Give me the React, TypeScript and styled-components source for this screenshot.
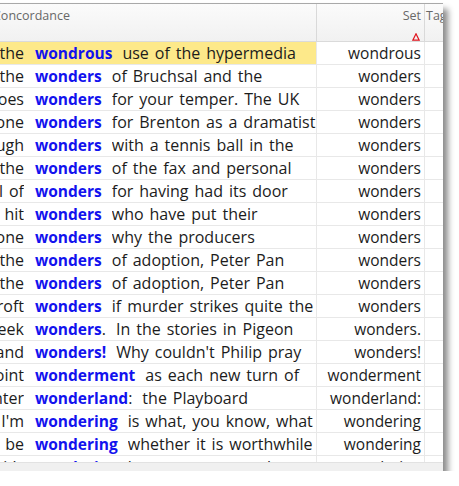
import styled, { createGlobalStyle } from "styled-components";

type Line = {
  left: string;
  keyword: string;
  tail?: string;
  right: string;
  set: string;
  current?: boolean;
};

const lines: Line[] = [
  { left: "made use of the", keyword: "wondrous", right: "use of the hypermedia", set: "wondrous", current: true },
  { left: "marvel at the", keyword: "wonders", right: "of Bruchsal and the", set: "wonders" },
  { left: "it does", keyword: "wonders", right: "for your temper. The UK", set: "wonders" },
  { left: "did no one", keyword: "wonders", right: "for Brenton as a dramatist", set: "wonders" },
  { left: "strangely enough", keyword: "wonders", right: "with a tennis ball in the", set: "wonders" },
  { left: "one of the", keyword: "wonders", right: "of the fax and personal", set: "wonders" },
  { left: "full of", keyword: "wonders", right: "for having had its door", set: "wonders" },
  { left: "hit", keyword: "wonders", right: "who have put their", set: "wonders" },
  { left: "someone", keyword: "wonders", right: "why the producers", set: "wonders" },
  { left: "among the", keyword: "wonders", right: "of adoption, Peter Pan", set: "wonders" },
  { left: "among the", keyword: "wonders", right: "of adoption, Peter Pan", set: "wonders" },
  { left: "Miss Bancroft", keyword: "wonders", right: "if murder strikes quite the", set: "wonders" },
  { left: "seven-day week", keyword: "wonders", tail: ".", right: "In the stories in Pigeon", set: "wonders." },
  { left: "in a strange land", keyword: "wonders!", right: "Why couldn't Philip pray", set: "wonders!" },
  { left: "to the point", keyword: "wonderment", right: "as each new turn of", set: "wonderment" },
  { left: "a winter", keyword: "wonderland", tail: ":", right: "the Playboard", set: "wonderland:" },
  { left: "I'm", keyword: "wondering", right: "is what, you know, what", set: "wondering" },
  { left: "be", keyword: "wondering", right: "whether it is worthwhile", set: "wondering" },
  { left: "it's", keyword: "wondering", right: "how we ever got there at", set: "wondering" },
];

const GlobalStyle = createGlobalStyle`
  html, body {
    margin: 0;
    padding: 0;
    background: #ffffff;
  }
  body {
    font-family: "Open Sans", "Noto Sans", sans-serif;
    overflow: hidden;
  }
`;

export default function App() {
  return (
    <>
      <GlobalStyle />
      <Window>
        <HeaderRow>
          <HeadCell $indent={2}>Concordance</HeadCell>
          <HeadCell $align="right">
            Set
            <SortMark viewBox="0 0 8 8">
              <path d="M4 0.8 L7.2 7.2 L0.8 7.2 Z" fill="none" stroke="#e0141e" strokeWidth="1.2" />
            </SortMark>
          </HeadCell>
          <HeadCell $last>Tag</HeadCell>
        </HeaderRow>
        <Body>
          {lines.map((line, i) => (
            <Row key={i}>
              <ConcCell $current={line.current}>
                <LeftContext>
                  <span>{line.left}</span>
                </LeftContext>
                <KeywordBox>
                  <Keyword>{line.keyword}</Keyword>
                  {line.tail}
                </KeywordBox>
                <RightContext>{line.right}</RightContext>
              </ConcCell>
              <SetCell>{line.set}</SetCell>
              <TagCell />
            </Row>
          ))}
        </Body>
        <BottomBar />
      </Window>
    </>
  );
}

const Window = styled.div`
  margin: 3px 0 0 -9px;
  width: 452px;
  border-top: 1px solid #a9a9a9;
  background: #ffffff;
  overflow: hidden;
  box-shadow: 5px 6px 6px rgba(0, 0, 0, 0.45);
`;

const HeaderRow = styled.div`
  display: grid;
  grid-template-columns: 326px 108px 1fr;
  height: 37px;
  background: linear-gradient(#fbfbfb, #f1f1f1);
  border-bottom: 1px solid #dadada;
`;

const HeadCell = styled.div<{ $align?: "left" | "right"; $last?: boolean; $indent?: number }>`
  position: relative;
  padding: 3px ${(p) => (p.$align === "right" ? "3px" : "2px")} 0 ${(p) => p.$indent ?? 1}px;
  text-align: ${(p) => p.$align ?? "left"};
  border-right: ${(p) => (p.$last ? "none" : "1px solid #d9d9d9")};
  font-size: 12.5px;
  color: #686868;
  white-space: nowrap;
  overflow: hidden;
`;

const SortMark = styled.svg`
  position: absolute;
  right: 4px;
  bottom: 0;
  width: 8px;
  height: 8px;
`;

const Body = styled.div`
  height: 420px;
  overflow: hidden;
`;

const Row = styled.div`
  display: grid;
  grid-template-columns: 326px 108px 1fr;
  height: 23px;
  border-bottom: 1px solid #e8e8e8;
  box-sizing: border-box;
  line-height: 22px;
  color: #1c1c1c;
`;

const ConcCell = styled.div<{ $current?: boolean }>`
  display: flex;
  align-items: baseline;
  font-size: 16px;
  word-spacing: 1.8px;
  background: ${(p) => (p.$current ? "#fde98a" : "transparent")};
  border-right: 1px solid #e8e8e8;
  white-space: nowrap;
  overflow: hidden;
`;

const LeftContext = styled.div`
  flex: 0 0 33px;
  display: flex;
  justify-content: flex-end;
  overflow: hidden;
`;

const KeywordBox = styled.div`
  flex: none;
  padding: 0 10px 0 11px;
`;

const Keyword = styled.span`
  font-size: 15.5px;
  font-weight: 700;
  color: #1212ee;
`;

const RightContext = styled.div`
  flex: 1;
  overflow: hidden;
`;

const SetCell = styled.div`
  padding-right: 3px;
  font-size: 15.5px;
  text-align: right;
  border-right: 1px solid #e8e8e8;
  white-space: nowrap;
  overflow: hidden;
`;

const TagCell = styled.div``;

const BottomBar = styled.div`
  height: 8px;
  background: #f0f0f0;
  border-top: 1px solid #e2e2e2;
`;
